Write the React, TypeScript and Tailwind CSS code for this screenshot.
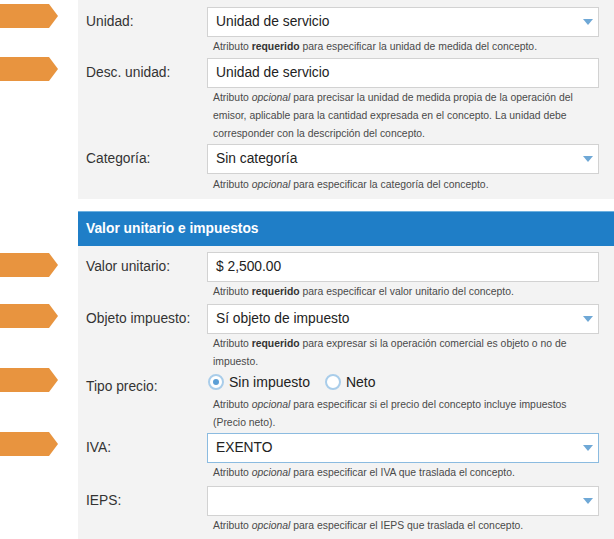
import React from 'react';

const font = { fontFamily: '"Liberation Sans", Arial, sans-serif' };

const Arrow = () => (
  <svg width="58" height="24" viewBox="0 0 58 24" className="block">
    <polygon points="0,0 49,0 58,12 49,24 0,24" fill="#e8943f" />
  </svg>
);

const Caret = () => (
  <svg width="10" height="6" viewBox="0 0 10 6" className="block">
    <polygon points="0,0 10,0 5,6" fill="#6fa8d6" />
  </svg>
);

interface FieldProps {
  label: string;
  arrow?: string; // offset del marcador
  row: string; // espaciado de la fila
  children: React.ReactNode;
  help: React.ReactNode;
  helpClass?: string;
}

const Field: React.FC<FieldProps> = ({ label, arrow, row, children, help, helpClass }) => (
  <div className="flex">
    <div className="w-[78px] shrink-0 bg-white">
      {arrow && <div className={arrow}><Arrow /></div>}
    </div>
    <div className={`flex-1 bg-[#f3f3f3] flex ${row}`}>
      <div className="w-[129px] shrink-0 pl-2 h-[30px] flex items-center text-[13.8px] text-[#333]">
        {label}
      </div>
      <div className="w-[392px]">
        {children}
        <div className={`pl-[6px] text-[10.4px] leading-[18px] text-[#4a4a4a] ${helpClass ?? 'mt-[1px]'}`}>
          {help}
        </div>
      </div>
    </div>
  </div>
);

const Input = ({ value, select, focus }: { value: string; select?: boolean; focus?: boolean }) => (
  <div
    className={`h-[30px] bg-white border flex items-center justify-between pl-[8px] pr-[5px] text-[13.8px] text-[#222] ${
      focus ? 'border-[#8bbbe0]' : 'border-[#d2d2d2]'
    }`}
  >
    <span>{value}</span>
    {select && <Caret />}
  </div>
);

const Radio = ({ checked, label }: { checked?: boolean; label: string }) => (
  <div className="flex items-center gap-[5px]">
    <span className="w-[16px] h-[16px] rounded-full border-2 border-[#a9cdea] bg-white flex items-center justify-center">
      {checked && <span className="w-[6px] h-[6px] rounded-full bg-[#5c9fd6]" />}
    </span>
    <span className="text-[14px] text-[#222]">{label}</span>
  </div>
);

const Req = () => <b className="font-bold text-[#333]">requerido</b>;
const Opc = () => <i>opcional</i>;

export default function App() {
  return (
    <div className="w-[614px] h-[539px] bg-white overflow-hidden" style={font}>
      {/* Panel superior */}
      <Field label="Unidad:" arrow="mt-[4px]" row="pt-[7px]" help={<>Atributo <Req /> para especificar la unidad de medida del concepto.</>}>
        <Input value="Unidad de servicio" select />
      </Field>
      <Field
        label="Desc. unidad:"
        arrow="mt-[1px]"
        row="pt-[2px]"
        help={
          <>
            Atributo <Opc /> para precisar la unidad de medida propia de la operación del
            <br />
            emisor, aplicable para la cantidad expresada en el concepto. La unidad debe
            <br />
            corresponder con la descripción del concepto.
          </>
        }
      >
        <Input value="Unidad de servicio" />
      </Field>
      <Field label="Categoría:" row="pt-[1px] pb-[5px]" helpClass="mt-[2px]" help={<>Atributo <Opc /> para especificar la categoría del concepto.</>}>
        <Input value="Sin categoría" select />
      </Field>

      <div className="h-[12px]" />

      {/* Encabezado */}
      <div className="flex">
        <div className="w-[78px] shrink-0" />
        <div className="flex-1 h-[35px] bg-[#1f7ec7] border-t border-[#6eb1e0] flex items-center pl-2 text-white font-bold text-[13.8px]">
          Valor unitario e impuestos
        </div>
      </div>

      {/* Panel inferior */}
      <Field label="Valor unitario:" arrow="mt-[7px]" row="pt-[6px]" help={<>Atributo <Req /> para especificar el valor unitario del concepto.</>}>
        <Input value="$ 2,500.00" />
      </Field>
      <Field
        label="Objeto impuesto:"
        arrow="mt-[3px]"
        row="pt-[3px]"
        help={
          <>
            Atributo <Req /> para expresar si la operación comercial es objeto o no de
            <br />
            impuesto.
          </>
        }
      >
        <Input value="Sí objeto de impuesto" select />
      </Field>
      <Field
        label="Tipo precio:"
        arrow="-mt-[3px]"
        row="pt-[1px]"
        helpClass="mt-[4px]"
        help={
          <>
            Atributo <Opc /> para especificar si el precio del concepto incluye impuestos
            <br />
            (Precio neto).
          </>
        }
      >
        <div className="h-[20px] flex items-center gap-[15px] pl-[1px]">
          <Radio checked label="Sin impuesto" />
          <Radio label="Neto" />
        </div>
      </Field>
      <Field label="IVA:" arrow="mt-0" row="pt-[1px]" help={<>Atributo <Opc /> para especificar el IVA que traslada el concepto.</>}>
        <Input value="EXENTO" select focus />
      </Field>
      <Field label="IEPS:" row="pt-[4px] pb-[4px]" help={<>Atributo <Opc /> para especificar el IEPS que traslada el concepto.</>}>
        <Input value="" select />
      </Field>
    </div>
  );
}
